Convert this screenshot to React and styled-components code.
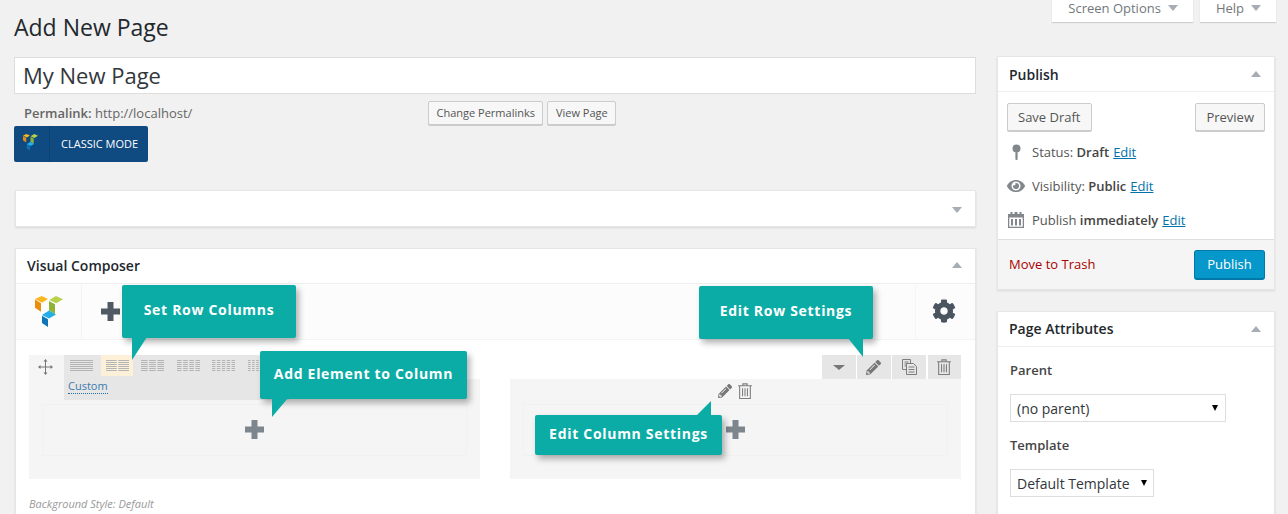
import React from 'react';
import styled, { createGlobalStyle } from 'styled-components';
import { FaCog, FaEye, FaPencilAlt } from 'react-icons/fa';

const Global = createGlobalStyle`
  html, body { margin: 0; padding: 0; background: #f1f1f1; }
  body { font-family: "Open Sans", "Liberation Sans", sans-serif; font-size: 13px; color: #444; }
  * { box-sizing: border-box; }
`;

const Page = styled.div`
  position: relative;
  width: 1288px;
  height: 514px;
  overflow: hidden;
  padding-left: 14px;
  background: #f1f1f1;
`;
const TopBar = styled.header`
  display: flex;
  justify-content: space-between;
  align-items: flex-start;
  height: 56px;
  padding-right: 12px;
`;
const Title = styled.h1`
  margin: 11px 0 0;
  font-size: 23px;
  line-height: 32px;
  font-weight: 400;
  color: #23282d;
`;
const Tabs = styled.div`
  display: flex;
  gap: 7px;
`;
const Tab = styled.div`
  display: flex;
  align-items: center;
  height: 22px;
  padding: 0 15px 6px 16px;
  gap: 7px;
  background: #fff;
  color: #72777c;
  font-size: 13px;
  box-shadow: 0 1px 1px rgba(0,0,0,.14);
`;
const Caret = styled.span`
  display: inline-block;
  width: 0;
  height: 0;
  border-left: ${p => p.$s || 5}px solid transparent;
  border-right: ${p => p.$s || 5}px solid transparent;
  ${p => (p.$up ? 'border-bottom' : 'border-top')}: ${p => p.$h || 6}px solid ${p => p.$c || '#a8adb3'};
`;
const Columns = styled.div`
  display: flex;
  gap: 21px;
  align-items: flex-start;
`;
const Main = styled.main`
  width: 962px;
  flex: none;
`;
const Side = styled.aside`
  width: 278px;
  flex: none;
`;
const TitleInput = styled.input`
  display: block;
  width: 100%;
  height: 37px;
  margin-top: 1px;
  padding: 0 8px 2px;
  border: 1px solid #ddd;
  background: #fff;
  font: 400 22px "Open Sans", sans-serif;
  color: #32373c;
  outline: 0;
`;
const PermaRow = styled.div`
  display: flex;
  align-items: center;
  height: 32px;
  padding-left: 10px;
  padding-top: 5px;
`;
const PermaText = styled.div`
  width: 404px;
  color: #666;
  font-size: 13px;
  b { font-weight: 600; }
`;
const SmallButton = styled.button`
  height: 24px;
  padding: 0 7.5px;
  margin-right: 4px;
  background: #f7f7f7;
  border: 1px solid #ccc;
  border-radius: 2px;
  box-shadow: 0 1px 0 #ccc;
  color: #555;
  font: 400 11px "Open Sans", sans-serif;
`;
const ClassicButton = styled.button`
  display: flex;
  align-items: stretch;
  width: 134px;
  height: 36px;
  padding: 0;
  border: 0;
  border-radius: 2px;
  background: #0f4a80;
  color: #fff;
  font: 500 11px "Open Sans", sans-serif;
`;
const ClassicLogo = styled.span`
  display: flex;
  align-items: center;
  justify-content: center;
  width: 36px;
  padding-right: 2px;
  padding-bottom: 3px;
  border-right: 1px solid #0c4173;
`;
const ClassicLabel = styled.span`
  align-self: center;
  padding: 0 0 2px 11px;
  white-space: nowrap;
`;
const Box = styled.section`
  margin-left: ${p => p.$ml ?? 1}px;
  margin-top: ${p => p.$mt ?? 0}px;
  background: #fff;
  box-shadow: 0 1px 2px rgba(0,0,0,.1);
  border: 1px solid #e6e6e6;
`;
const EmptyHead = styled.div`
  display: flex;
  align-items: center;
  justify-content: flex-end;
  height: 35px;
  padding-right: 13px;
  padding-top: 2px;
`;
const BoxHead = styled.div`
  display: flex;
  align-items: center;
  justify-content: space-between;
  height: 35px;
  padding: 0 13px ${p => p.$pb ?? 2}px 11px;
  border-bottom: 1px solid #eee;
  font-size: 14px;
  font-weight: 600;
  color: #23282d;
`;
const Toolbar = styled.div`
  display: flex;
  align-items: center;
  height: 56px;
  background: #fcfcfc;
  border-bottom: 1px solid #f3f3f3;
`;
const LogoCell = styled.div`
  display: flex;
  align-items: center;
  justify-content: center;
  width: 66px;
  height: 100%;
  border-right: 1px solid #f3f3f3;
`;
const AddCell = styled.div`
  flex: 1;
  display: flex;
  align-items: center;
  padding-left: 19px;
`;
const GearCell = styled.div`
  display: flex;
  align-items: center;
  justify-content: center;
  width: 60px;
  height: 100%;
  padding: 0 3px 2px 0;
  border-left: 1px solid #f5f5f5;
  color: #4a5560;
`;
const Content = styled.div`
  padding: 15px 13px 0;
  height: 210px;
`;
const Row = styled.div`
  position: relative;
  width: 932px;
`;
const RowHead = styled.div`
  display: flex;
  justify-content: space-between;
  height: 24px;
`;
const Handle = styled.div`
  display: flex;
  align-items: center;
  justify-content: center;
  width: 35px;
  background: #f5f5f5;
  padding-right: 3px;
`;
const RowControls = styled.div`
  display: flex;
  gap: 1.67px;
`;
const RowControl = styled.div`
  display: flex;
  align-items: center;
  justify-content: center;
  width: 33.5px;
  background: #e6e6e6;
  color: #777;
`;
const RowColumns = styled.div`
  display: grid;
  grid-template-columns: 451px 451px;
  column-gap: 30px;
`;
const Column = styled.div`
  height: 100px;
  background: #f5f5f5;
  padding: 0 13px;
`;
const ColumnTools = styled.div`
  display: flex;
  align-items: center;
  justify-content: center;
  gap: 6px;
  height: 23px;
  color: #777;
  padding-right: 1px;
`;
const ColumnInner = styled.div`
  display: flex;
  align-items: center;
  justify-content: center;
  height: 52px;
  margin-top: ${p => p.$mt}px;
  padding-bottom: 2px;
  border: 1px solid #f1f1f1;
`;
const LayoutPopup = styled.div`
  position: absolute;
  left: 35px;
  top: 0;
  width: 225px;
  height: 45px;
  background: #e6e6e6;
`;
const LayoutIcons = styled.div`
  display: flex;
  gap: 3.5px;
  height: 21px;
  padding-left: 1.5px;
`;
const LayoutIcon = styled.div`
  display: flex;
  align-items: center;
  justify-content: center;
  width: 32px;
  height: 21px;
  background: ${p => (p.$on ? '#fdf0d8' : 'transparent')};
`;
const CustomLink = styled.span`
  display: inline-block;
  margin: 1px 0 0 4px;
  font-size: 11px;
  line-height: 15px;
  color: #3b7bad;
  border-bottom: 1px dotted #1f6fb0;
`;
const StyleNote = styled.div`
  margin-top: 17px;
  font-size: 11px;
  font-style: italic;
  color: #999;
`;
const Callout = styled.div`
  position: absolute;
  left: ${p => p.$x}px;
  top: ${p => p.$y}px;
  width: ${p => p.$w}px;
  height: ${p => p.$h}px;
  display: flex;
  align-items: center;
  justify-content: center;
  padding-bottom: 4px;
  background: #0aaca5;
  border-radius: 2px;
  box-shadow: 3px 4px 6px rgba(0,0,0,.3);
  color: #fff;
  font-size: 14px;
  font-weight: 700;
  letter-spacing: .7px;
  white-space: nowrap;
`;
const Tail = styled.svg`
  position: absolute;
  left: ${p => p.$x}px;
  top: ${p => p.$y}px;
  overflow: visible;
`;
const PublishBody = styled.div`
  padding: 11px 9px 0;
`;
const ButtonRow = styled.div`
  display: flex;
  justify-content: space-between;
  margin-bottom: 4px;
`;
const WpButton = styled.button`
  height: 28px;
  padding: 0 10px;
  background: #f7f7f7;
  border: 1px solid #ccc;
  border-radius: 2px;
  box-shadow: 0 1px 0 #ccc;
  color: #555;
  font: 400 13px "Open Sans", sans-serif;
`;
const MiscRow = styled.div`
  display: flex;
  align-items: center;
  height: 34px;
  color: #555;
  font-size: 13px;
  b { font-weight: 600; color: #444; margin: 0 4px 0 0; }
`;
const MiscIcon = styled.span`
  display: flex;
  justify-content: center;
  width: 18px;
  margin-right: 7px;
  color: #82878c;
`;
const EditLink = styled.a`
  color: #0073aa;
  text-decoration: underline;
`;
const PublishFoot = styled.div`
  display: flex;
  align-items: center;
  justify-content: space-between;
  height: 50px;
  margin-top: 2px;
  padding: 0 9px 0 11px;
  background: #f5f5f5;
  border-top: 1px solid #ddd;
`;
const Trash = styled.a`
  color: #a00;
  font-size: 13px;
  padding-bottom: 2px;
`;
const PublishButton = styled.button`
  width: 71px;
  height: 30px;
  background: #0798cb;
  border: 1px solid #0079a8;
  border-width: 1px 1px 2px;
  border-radius: 3px;
  color: #fff;
  font: 400 13px "Open Sans", sans-serif;
`;
const AttrBody = styled.div`
  padding: 14px 12px 40px;
`;
const AttrLabel = styled.div`
  font-size: 13px;
  font-weight: 600;
  color: #444;
  line-height: 18px;
  margin-bottom: ${p => p.$mb || 15}px;
`;
const SelectWrap = styled.div`
  position: relative;
  width: ${p => p.$w}px;
  height: 28px;
  margin-bottom: ${p => p.$mb || 0}px;
  &::after {
    content: "";
    position: absolute;
    right: ${p => p.$r}px;
    top: 11px;
    border-left: 3.5px solid transparent;
    border-right: 3.5px solid transparent;
    border-top: 6px solid #000;
  }
`;
const Select = styled.select`
  width: 100%;
  height: 100%;
  appearance: none;
  padding: 0 6px;
  background: #fff;
  border: 1px solid #ddd;
  border-radius: 0;
  font: 400 14px "Open Sans", sans-serif;
  color: #32373c;
`;

const VcLogo = ({ size = 28 }) => (
  <svg width={size} height={size * 31 / 28} viewBox="0 0 28 31">
    <polygon points="6.7,0 13,3 7,6.7 0,3" fill="#f8b71c" />
    <polygon points="0,3.6 6,7.3 6,15.7 0,11.7" fill="#e88d0c" />
    <polygon points="14.3,4 21,0 28,3.3 21.3,7.3" fill="#b6d14a" />
    <polygon points="14,5 20,8.3 20,18 14,14.5" fill="#8fb339" />
    <polygon points="7,19 14,14.5 21,18.5 14,22.5" fill="#23aee8" />
    <polygon points="7,19.8 13,23.2 13,31 7,27" fill="#0f74b8" />
  </svg>
);

const Plus = ({ color, size = 19 }) => (
  <svg width={size} height={size} viewBox="0 0 19 19" fill={color}>
    <path d="M6.5 0h6v6.5H19v6h-6.5V19h-6v-6.5H0v-6h6.5z" />
  </svg>
);

const MoveIcon = () => (
  <svg width="15" height="16" viewBox="0 0 15 16" fill="#777" stroke="#777">
    <path d="M7.5 2v12M1.5 8h12" fill="none" strokeWidth="1" />
    <path d="M7.5 0l2 2.5h-4zM7.5 16l2-2.5h-4zM0 8l2.5-2v4zM15 8l-2.5-2v4z" stroke="none" />
  </svg>
);

const LayoutGlyph = ({ cols }) => {
  const width = 23;
  const gap = 1.5;
  const cw = (width - gap * (cols - 1)) / cols;
  const ys = [0.5, 2.5, 4.5, 6.5, 8.5, 10.5];
  return (
    <svg width={width} height="11" viewBox="0 0 23 11" stroke="#b4b4b4" strokeWidth="1">
      {ys.map(y =>
        Array.from({ length: cols }).map((_, i) => (
          <line key={`${y}-${i}`} x1={i * (cw + gap)} x2={i * (cw + gap) + cw} y1={y} y2={y} />
        ))
      )}
    </svg>
  );
};

const TrashIcon = ({ w = 14, h = 16 }) => (
  <svg width={w} height={h} viewBox="0 0 13 15" fill="none" stroke="#7d7d7d" strokeWidth="1">
    <path d="M0 2.5h13M4.5 2.5V.8h4v1.7M1.5 2.5v12h10v-12M4.2 5v7.5M6.5 5v7.5M8.8 5v7.5" />
  </svg>
);

const CopyIcon = () => (
  <svg width="15" height="16" viewBox="0 0 15 16" fill="#e6e6e6" stroke="#7d7d7d" strokeWidth="1">
    <path d="M.5.5h8v10h-8zM2.5 3h4M2.5 5h4M2.5 7h4" />
    <path d="M4.5 4.5h7l3 3v8h-10z" />
    <path d="M6.5 8h6M6.5 10.5h6M6.5 13h6" fill="none" />
  </svg>
);

const PinIcon = () => (
  <svg width="11" height="16" viewBox="0 0 11 16" fill="#82878c">
    <circle cx="5.5" cy="4.5" r="4" />
    <rect x="4.4" y="8" width="2.2" height="8" rx="1" />
  </svg>
);

const CalendarIcon = () => (
  <svg width="16" height="16" viewBox="0 0 16 16" fill="#82878c">
    <path d="M0 2h2.5V0h2v2h2V0h3v2h2V0h2v2H16v14H0zM1.3 5.5v9.2h13.4V5.5z" />
    <path d="M3 7h2v6.5H3zM7 7h2v6.5H7zM11 7h2v6.5h-2z" />
  </svg>
);

const layouts = [1, 2, 3, 4, 5, 6];

export default function App() {
  return (
    <Page>
      <Global />
      <TopBar>
        <Title>Add New Page</Title>
        <Tabs>
          <Tab>Screen Options <Caret /></Tab>
          <Tab>Help <Caret /></Tab>
        </Tabs>
      </TopBar>
      <Columns>
        <Main>
          <TitleInput defaultValue="My New Page" />
          <PermaRow>
            <PermaText><b>Permalink:</b> http://localhost/</PermaText>
            <SmallButton>Change Permalinks</SmallButton>
            <SmallButton>View Page</SmallButton>
          </PermaRow>
          <ClassicButton>
            <ClassicLogo><VcLogo size={15} /></ClassicLogo>
            <ClassicLabel>CLASSIC MODE</ClassicLabel>
          </ClassicButton>
          <Box $mt={28}>
            <EmptyHead><Caret $s={5} $h={6} /></EmptyHead>
          </Box>
          <Box $mt={21}>
            <BoxHead>Visual Composer <Caret $up $s={5} $h={6} /></BoxHead>
            <Toolbar>
              <LogoCell><VcLogo /></LogoCell>
              <AddCell><Plus color="#4f5a65" /></AddCell>
              <GearCell><FaCog size={24} /></GearCell>
            </Toolbar>
            <Content>
              <Row>
                <RowHead>
                  <Handle><MoveIcon /></Handle>
                  <RowControls>
                    <RowControl><Caret $s={6} $h={5} $c="#777" /></RowControl>
                    <RowControl><FaPencilAlt size={15} /></RowControl>
                    <RowControl><CopyIcon /></RowControl>
                    <RowControl><TrashIcon /></RowControl>
                  </RowControls>
                </RowHead>
                <RowColumns>
                  <Column>
                    <ColumnInner $mt={25}><Plus color="#7d858d" /></ColumnInner>
                  </Column>
                  <Column>
                    <ColumnTools>
                      <FaPencilAlt size={14} />
                      <TrashIcon />
                    </ColumnTools>
                    <ColumnInner $mt={2}><Plus color="#7d858d" /></ColumnInner>
                  </Column>
                </RowColumns>
                <LayoutPopup>
                  <LayoutIcons>
                    {layouts.map(n => (
                      <LayoutIcon key={n} $on={n === 2}><LayoutGlyph cols={n} /></LayoutIcon>
                    ))}
                  </LayoutIcons>
                  <CustomLink>Custom</CustomLink>
                </LayoutPopup>
              </Row>
              <StyleNote>Background Style: Default</StyleNote>
            </Content>
          </Box>
        </Main>
        <Side>
          <Box $ml={0}>
            <BoxHead $pb={0}>Publish <Caret $up $s={5} $h={6} /></BoxHead>
            <PublishBody>
              <ButtonRow>
                <WpButton>Save Draft</WpButton>
                <WpButton>Preview</WpButton>
              </ButtonRow>
              <MiscRow><MiscIcon><PinIcon /></MiscIcon>Status:&nbsp;<b>Draft</b><EditLink>Edit</EditLink></MiscRow>
              <MiscRow><MiscIcon><FaEye size={18} /></MiscIcon>Visibility:&nbsp;<b>Public</b><EditLink>Edit</EditLink></MiscRow>
              <MiscRow><MiscIcon><CalendarIcon /></MiscIcon>Publish&nbsp;<b>immediately</b><EditLink>Edit</EditLink></MiscRow>
            </PublishBody>
            <PublishFoot>
              <Trash>Move to Trash</Trash>
              <PublishButton>Publish</PublishButton>
            </PublishFoot>
          </Box>
          <Box $ml={0} $mt={21}>
            <BoxHead $pb={1}>Page Attributes <Caret $up $s={5} $h={6} /></BoxHead>
            <AttrBody>
              <AttrLabel>Parent</AttrLabel>
              <SelectWrap $w={216} $r={8} $mb={14}>
                <Select><option>(no parent)</option></Select>
              </SelectWrap>
              <AttrLabel $mb={15}>Template</AttrLabel>
              <SelectWrap $w={144} $r={7}>
                <Select><option>Default Template</option></Select>
              </SelectWrap>
            </AttrBody>
          </Box>
        </Side>
      </Columns>

      <Callout $x={122} $y={285} $w={174} $h={53}>
        Set Row Columns
        <Tail $x={10} $y={52} width="16" height="24"><polygon points="0,0 15,0 0,23" fill="#0aaca5" /></Tail>
      </Callout>
      <Callout $x={260} $y={351} $w={207} $h={48}>
        Add Element to Column
        <Tail $x={12} $y={47} width="17" height="20"><polygon points="0,0 16,0 0,19" fill="#0aaca5" /></Tail>
      </Callout>
      <Callout $x={699} $y={286} $w={174} $h={53}>
        Edit Row Settings
        <Tail $x={149} $y={52} width="16" height="20"><polygon points="0,0 15,0 15,19" fill="#0aaca5" /></Tail>
      </Callout>
      <Callout $x={535} $y={415} $w={187} $h={40}>
        Edit Column Settings
        <Tail $x={161} $y={-14} width="15" height="15"><polygon points="15,0 15,15 0,15" fill="#0aaca5" /></Tail>
      </Callout>
    </Page>
  );
}
